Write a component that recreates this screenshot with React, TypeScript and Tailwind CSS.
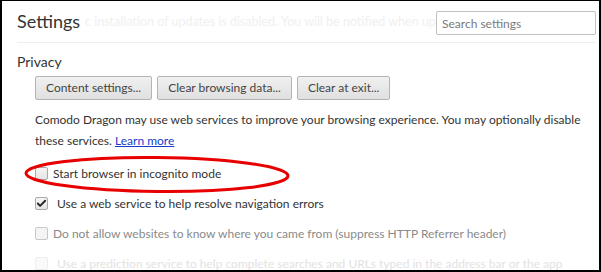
import { Check } from 'lucide-react';

const font = { fontFamily: 'Lato, "Open Sans", sans-serif' };

function Checkbox({ checked = false, disabled = false, faint = false }: { checked?: boolean; disabled?: boolean; faint?: boolean }) {
  return (
    <span
      className={`relative flex h-[13px] w-[13px] shrink-0 items-center justify-center rounded-[2px] border ${
        faint
          ? 'border-[#eee] bg-[#fafafa]'
          : disabled
          ? 'border-[#c8c8c8] bg-[#f4f4f4]'
          : 'border-[#a9a9a9] bg-gradient-to-b from-[#f6f6f6] to-[#e4e4e4]'
      }`}
    >
      {checked && <Check className="h-[11px] w-[11px] text-[#222]" strokeWidth={4} />}
    </span>
  );
}

function Button({ children }: { children: React.ReactNode }) {
  return (
    <button className="h-[24px] rounded-[2px] border border-[#b4b4b4] bg-gradient-to-b from-[#f0f0f0] to-[#e0e0e0] px-[10px] text-[12px] text-[#444]">
      {children}
    </button>
  );
}

export default function App() {
  return (
    <div
      className="relative h-[272px] w-[601px] overflow-hidden border-t border-r-2 border-b-2 border-l-2 border-black bg-white pl-[15px] pr-[3px]"
      style={font}
    >
      {/* Header */}
      <div className="relative flex h-[42px] items-start justify-between border-b border-[#eee]">
        <span className="absolute left-[68px] top-[12px] whitespace-nowrap text-[12.5px] text-[#f0f0f0]">
          c installation of updates is disabled. You will be notified when updates are available.
        </span>
        <h1 className="relative mt-[6px] text-[18px] font-normal leading-[28px] text-[#333]">Settings</h1>
        <input
          placeholder="Search settings"
          className="relative mt-[10px] h-[24px] w-[160px] rounded-[2px] border border-[#c2c2c2] bg-white px-[5px] text-[12px] text-[#333] placeholder:text-[#7a7a7a] outline-none"
        />
      </div>

      {/* Privacy */}
      <h2 className="mt-[9px] text-[14px] leading-[20px] text-[#333]">Privacy</h2>
      <div className="ml-[18px] mt-[4px] flex gap-[5px]">
        <Button>Content settings...</Button>
        <Button>Clear browsing data...</Button>
        <Button>Clear at exit...</Button>
      </div>

      <p className="ml-[18px] mt-[9px] w-[562px] text-[12px] leading-[21px] text-[#333]">
        Comodo Dragon may use web services to improve your browsing experience. You may optionally disable these
        services.{' '}
        <a href="#" className="text-[#1a3ccc] underline">
          Learn more
        </a>
      </p>

      <div className="ml-[18px] mt-[16px] flex flex-col gap-[17px] text-[12px] leading-[13px]">
        <label className="flex items-center gap-[5px] text-[#333]">
          <Checkbox />
          Start browser in incognito mode
        </label>
        <label className="flex items-center gap-[9px] text-[#333]">
          <Checkbox checked />
          Use a web service to help resolve navigation errors
        </label>
        <label className="flex items-center gap-[5px] text-[#8a8a8a]">
          <Checkbox disabled />
          Do not allow websites to know where you came from (suppress HTTP Referrer header)
        </label>
        <label className="flex items-center gap-[9px] text-[#e2e2e2]">
          <Checkbox faint />
          Use a prediction service to help complete searches and URLs typed in the address bar or the app
        </label>
      </div>

      {/* Red annotation ellipse */}
      <svg className="pointer-events-none absolute left-[20px] top-[154px]" width="272" height="42" viewBox="0 0 272 42">
        <ellipse cx="135" cy="19.5" rx="131" ry="17" fill="none" stroke="#e80000" strokeWidth="3" transform="rotate(0.6 135 19.5)" />
      </svg>
    </div>
  );
}
